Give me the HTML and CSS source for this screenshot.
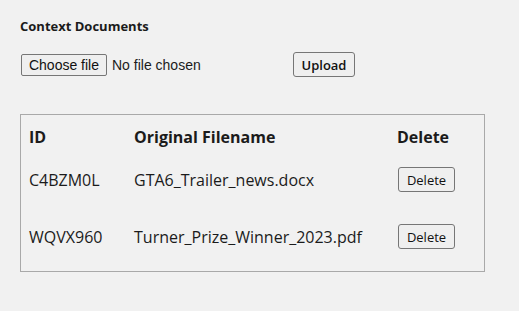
FILE: index.html
```html
<!DOCTYPE html>
<html lang="en">

<head>
    <meta charset="UTF-8">
    <meta name="viewport" content="width=device-width, initial-scale=1.0">
    <title>Context Documents</title>
    <link rel="stylesheet" href="styles.css">
</head>

<body>
    <div id="documents">
        <h4 class="title">Context Documents</h4>
        <form class="upload-form">
            <div class="file-picker">
                <label for="fileInput" class="choose-btn">Choose file</label>
                <span class="file-name">No file chosen</span>
                <input type="file" id="fileInput" name="file" class="file-input">
            </div>
            <button type="button" class="btn upload-btn">Upload</button>
        </form>
        <div class="doc-box">
            <table class="doc-table">
                <thead>
                    <tr>
                        <th class="col-id">ID</th>
                        <th class="col-name">Original Filename</th>
                        <th class="col-del">Delete</th>
                    </tr>
                </thead>
                <tbody>
                    <tr>
                        <td>C4BZM0L</td>
                        <td>GTA6_Trailer_news.docx</td>
                        <td><button class="btn del-btn">Delete</button></td>
                    </tr>
                    <tr>
                        <td>WQVX960</td>
                        <td>Turner_Prize_Winner_2023.pdf</td>
                        <td><button class="btn del-btn">Delete</button></td>
                    </tr>
                </tbody>
            </table>
        </div>
    </div>
</body>

</html>
```

FILE: styles.css
```css
body {
    margin: 0;
    background-color: #f1f1f1;
    color: #1b1b1b;
    font-family: "Open Sans", "Noto Sans", sans-serif;
}

#documents {
    padding: 17px 20px;
}

.title {
    margin: 0;
    font-size: 13px;
    font-weight: 700;
}

.upload-form {
    display: flex;
    align-items: center;
    margin-top: 17px;
}

.file-picker {
    display: flex;
    align-items: center;
    width: 273px;
    font-family: "Liberation Sans", Arial, sans-serif;
    font-size: 14px;
}

.file-input {
    display: none;
}

.choose-btn {
    box-sizing: border-box;
    margin-left: 1px;
    width: 86px;
    height: 22px;
    line-height: 20px;
    text-align: center;
    background-color: #efefef;
    border: 1px solid #767676;
    border-radius: 2px;
    color: #111;
}

.file-name {
    margin-left: 5px;
}

.btn {
    font-family: "Open Sans", "Noto Sans", sans-serif;
    background-color: #efefef;
    border: 1px solid #767676;
    border-radius: 3px;
    color: #111;
}

.upload-btn {
    width: 62px;
    height: 25px;
    padding: 0;
    font-size: 13px;
    font-weight: 600;
}

.doc-box {
    margin-top: 37px;
    width: 447px;
    border: 1px solid #a9a9a9;
    padding: 8px 8px 6px 8px;
}

.doc-table {
    border-collapse: collapse;
    font-size: 16px;
}

.doc-table th {
    height: 28px;
    padding: 0;
    text-align: left;
    font-weight: 700;
}

.doc-table td {
    height: 57px;
    padding: 0;
}

.col-id {
    width: 105px;
}

.col-name {
    width: 263px;
}

.del-btn {
    margin-left: 1px;
    width: 57px;
    height: 25px;
    padding: 0;
    font-size: 13px;
}
```
